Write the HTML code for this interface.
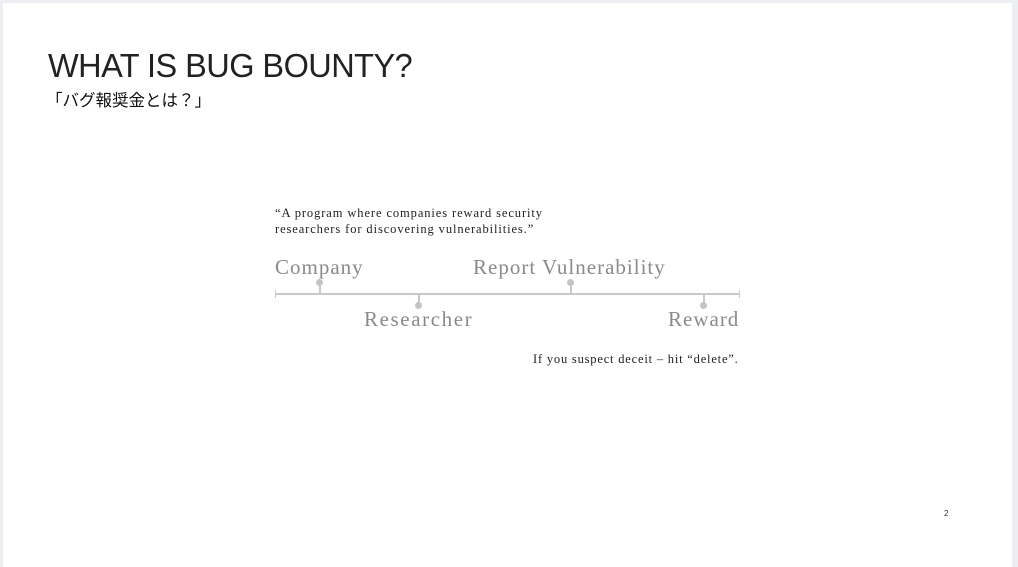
<!DOCTYPE html>
<html><head><meta charset="utf-8"><style>
html,body{margin:0;padding:0;}
body{width:1018px;height:567px;background:#eceef2;position:relative;overflow:hidden;}
.slide{position:absolute;left:3px;top:3px;width:1009px;height:564px;background:#fff;}
.a{position:absolute;white-space:nowrap;}
.t{left:48px;top:47px;font-family:"Liberation Sans",sans-serif;font-size:33px;font-weight:normal;color:#222;letter-spacing:-0.55px;transform:scaleX(0.985);transform-origin:left;}
.j{left:46px;top:87px;font-family:"Liberation Sans","Noto Sans CJK JP",sans-serif;font-size:16.5px;color:#111;}
.q{font-family:"Liberation Serif","Noto Serif CJK SC",serif;font-size:12.5px;color:#222;letter-spacing:0.9px;}
.l{font-family:"Liberation Serif",serif;font-size:21px;color:#8a8a8a;letter-spacing:1px;}
.ln{position:absolute;background:#c8c8c8;}
.d{position:absolute;width:7px;height:7px;border-radius:50%;background:#c4c4c4;}
</style></head><body>
<div class="slide"></div>
<div class="a t">WHAT IS BUG BOUNTY?</div>
<div class="a j">「バグ報奨金とは？」</div>
<div class="a q" style="left:275px;top:206px;">“A program where companies reward security</div>
<div class="a q" style="left:275px;top:222px;">researchers for discovering vulnerabilities.”</div>
<div class="a l" style="left:275px;top:255px;">Company</div>
<div class="a l" style="left:473px;top:255px;">Report Vulnerability</div>
<div class="a l" style="left:364px;top:307px;letter-spacing:1.6px;">Researcher</div>
<div class="a l" style="left:668px;top:307px;">Reward</div>
<div class="ln" style="left:275px;top:293px;width:465px;height:2px;"></div>
<div class="ln" style="left:275px;top:290px;width:1px;height:8px;"></div>
<div class="ln" style="left:739px;top:290px;width:1px;height:8px;"></div>
<div class="ln" style="left:319px;top:283px;width:2px;height:11px;"></div>
<div class="d" style="left:316px;top:279px;"></div>
<div class="ln" style="left:570px;top:283px;width:2px;height:11px;"></div>
<div class="d" style="left:567px;top:279px;"></div>
<div class="ln" style="left:418px;top:294px;width:2px;height:11px;"></div>
<div class="d" style="left:415px;top:302px;"></div>
<div class="ln" style="left:703px;top:294px;width:2px;height:11px;"></div>
<div class="d" style="left:700px;top:302px;"></div>
<div class="a q" style="left:533px;top:352px;letter-spacing:0.8px;">If you suspect deceit – hit “delete”.</div>
<div class="a" style="left:944px;top:509px;font-family:'Liberation Sans',sans-serif;font-size:8px;color:#333;">2</div>
</body></html>
